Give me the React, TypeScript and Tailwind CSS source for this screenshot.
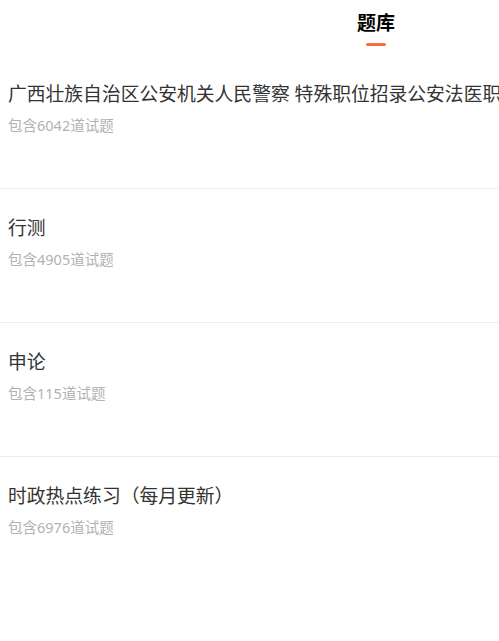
import React from "react";

interface BankItemI {
  id: number;
  name: string;
  count: number;
}

const banks: BankItemI[] = [
  { id: 1, name: "广西壮族自治区公安机关人民警察 特殊职位招录公安法医职位专业科目", count: 6042 },
  { id: 2, name: "行测", count: 4905 },
  { id: 3, name: "申论", count: 115 },
  { id: 4, name: "时政热点练习（每月更新）", count: 6976 },
];

const BankRow = ({ data, last }: { data: BankItemI; last: boolean }) => {
  return (
    <div
      className={`px-2 pt-[27px] pb-[53px] ${
        last ? "" : "border-b border-[#ececec]"
      }`}
    >
      <p className="text-[18.8px] leading-6 text-[#333333] whitespace-nowrap">
        {data.name}
      </p>
      <p className="mt-[9px] text-[14.5px] leading-5 text-[#b2b2b2]">
        包含{data.count}道试题
      </p>
    </div>
  );
};

export default function App() {
  return (
    <div
      className="w-full min-h-screen bg-white overflow-hidden"
      style={{ fontFamily: '"Noto Sans", "Noto Sans CJK SC", sans-serif' }}
    >
      {/* Header */}
      <div className="w-[752px] h-[55px] flex justify-center">
        <div className="flex flex-col items-center pt-[11px]">
          <p className="text-[19px] leading-6 font-bold text-black">题库</p>
          <div className="mt-[8px] w-5 h-[3px] rounded-full bg-[#ff6a3d]" />
        </div>
      </div>

      {/* List */}
      <div>
        {banks.map((data, i) => (
          <BankRow key={data.id} data={data} last={i == banks.length - 1} />
        ))}
      </div>
    </div>
  );
}
